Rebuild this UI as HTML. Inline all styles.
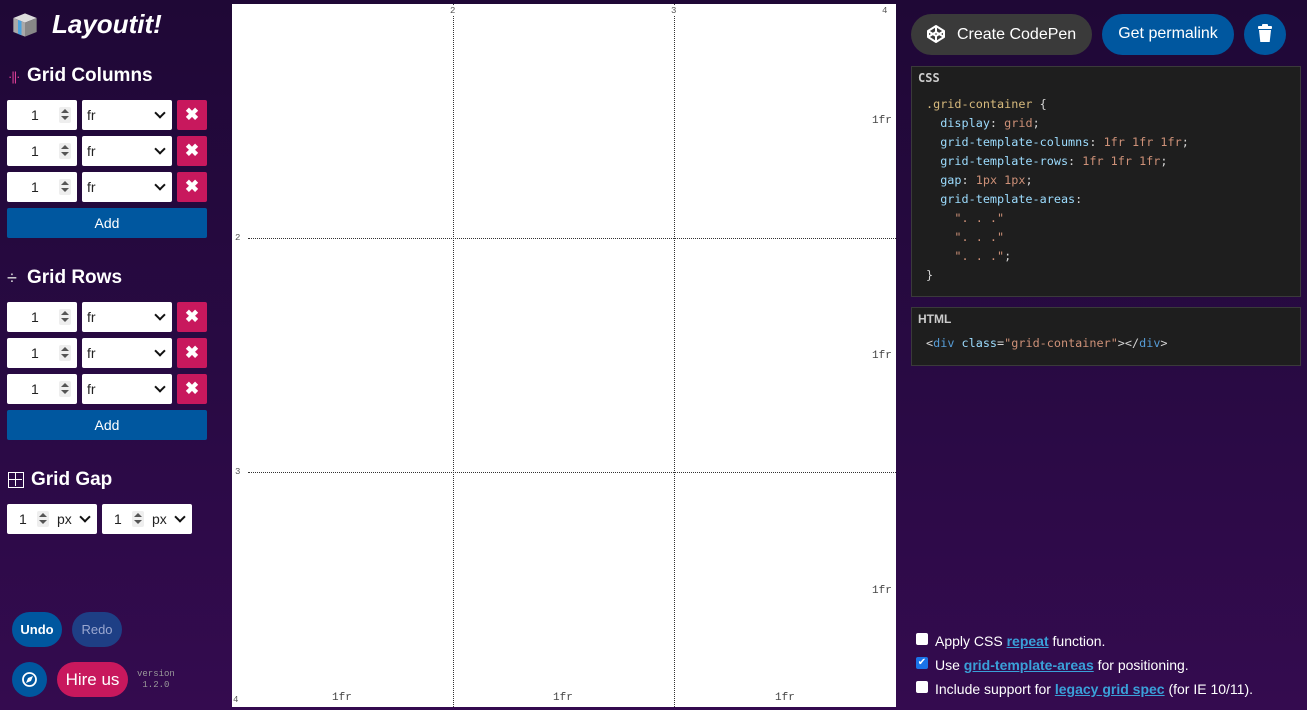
<!DOCTYPE html>
<html><head><meta charset="utf-8"><style>
*{box-sizing:border-box;margin:0;padding:0}
body{width:1307px;height:710px;overflow:hidden;background:linear-gradient(180deg,#1f0836 0%,#2a0a45 60%,#340b4f 100%);font-family:"Liberation Sans",sans-serif;position:relative;color:#fff}
.a{position:absolute}
.num{position:absolute;background:#fff;height:30px;width:70px;border-radius:2px;color:#222;font-size:14px}
.num .v{position:absolute;left:24px;top:7px}
.num .sp{position:absolute;right:6px;top:7px;width:12px;height:16px;background:#eee;border-radius:2px}
.sp:before{content:"";position:absolute;left:2px;top:2px;border:4px solid transparent;border-bottom:4px solid #555;border-top:0}
.sp:after{content:"";position:absolute;left:2px;top:9px;border:4px solid transparent;border-top:4px solid #555;border-bottom:0}
.sel{position:absolute;background:#fff;height:30px;width:90px;border-radius:2px;color:#222;font-size:14px}
.sel .v{position:absolute;left:5px;top:7px}
.chev{position:absolute;right:8px;top:9px;width:8px;height:8px;border-right:2px solid #111;border-bottom:2px solid #111;transform:rotate(45deg)}
.x{position:absolute;width:30px;height:30px;background:#c8185d;border-radius:2px;color:#fff;font-size:17px;text-align:center;line-height:30px;font-weight:bold}
.add{position:absolute;left:7px;width:200px;height:30px;background:#00579f;color:#fff;font-size:14px;text-align:center;line-height:30px;border-radius:2px}
h2{position:absolute;font-size:19px;font-weight:bold;color:#fff}
.vl{position:absolute;top:4px;height:703px;border-left:1px dotted #333}
.hl{position:absolute;left:248px;width:648px;border-top:1px dotted #333}
.lb{position:absolute;font-family:"Liberation Mono",monospace;font-size:9px;color:#555}
.fr{position:absolute;font-family:"Liberation Mono",monospace;font-size:11px;color:#444}
pre{font-family:"DejaVu Sans Mono","Liberation Mono",monospace;font-size:11.8px;line-height:19px;color:#9cdcfe}
.k{color:#9cdcfe}.s{color:#ce9178}.y{color:#d7ba7d}.w{color:#d4d4d4}.b{color:#569cd6}
.cb{position:absolute;left:916px;width:12px;height:12px;background:#fff;border-radius:2px}
.ct{position:absolute;left:935px;font-size:14px;color:#fff}
.ct u{color:#3aa0d8;font-weight:bold}
</style></head><body>

<div class="a" style="left:11px;top:11px;width:28px;height:28px">
<svg width="28" height="28" viewBox="0 0 24 24"><polygon points="12,2 22,6 12,10 2,6" fill="#ddd"/><polygon points="2,6 12,10 12,22 2,18" fill="#aaa"/><polygon points="12,10 22,6 22,18 12,22" fill="#888"/><polygon points="6,7.6 9,8.8 9,20.8 6,19.6" fill="#4aa3df"/></svg></div>
<div class="a" style="left:52px;top:9px;font-size:26px;font-weight:bold;font-style:italic">Layoutit!</div>

<div class="a" style="left:8px;top:69px;color:#e0409a;font-size:13px;letter-spacing:-1px">·||·</div>
<h2 style="left:27px;top:65px">Grid Columns</h2>

<div class="num" style="left:7px;top:100px"><span class="v">1</span><span class="sp"></span></div><div class="sel" style="left:82px;top:100px"><span class="v">fr</span><span class="chev"></span></div><div class="x" style="left:177px;top:100px">✖</div>
<div class="num" style="left:7px;top:136px"><span class="v">1</span><span class="sp"></span></div><div class="sel" style="left:82px;top:136px"><span class="v">fr</span><span class="chev"></span></div><div class="x" style="left:177px;top:136px">✖</div>
<div class="num" style="left:7px;top:172px"><span class="v">1</span><span class="sp"></span></div><div class="sel" style="left:82px;top:172px"><span class="v">fr</span><span class="chev"></span></div><div class="x" style="left:177px;top:172px">✖</div>
<div class="add" style="top:208px">Add</div>

<div class="a" style="left:7px;top:268px;font-size:18px;color:#ddd">÷</div>
<h2 style="left:27px;top:267px">Grid Rows</h2>
<div class="num" style="left:7px;top:302px"><span class="v">1</span><span class="sp"></span></div><div class="sel" style="left:82px;top:302px"><span class="v">fr</span><span class="chev"></span></div><div class="x" style="left:177px;top:302px">✖</div>
<div class="num" style="left:7px;top:338px"><span class="v">1</span><span class="sp"></span></div><div class="sel" style="left:82px;top:338px"><span class="v">fr</span><span class="chev"></span></div><div class="x" style="left:177px;top:338px">✖</div>
<div class="num" style="left:7px;top:374px"><span class="v">1</span><span class="sp"></span></div><div class="sel" style="left:82px;top:374px"><span class="v">fr</span><span class="chev"></span></div><div class="x" style="left:177px;top:374px">✖</div>
<div class="add" style="top:410px">Add</div>

<div class="a" style="left:8px;top:472px;width:16px;height:16px;border:1.5px solid #fff"><div class="a" style="left:6px;top:0;height:13px;border-left:1.5px solid #fff"></div><div class="a" style="top:6px;left:0;width:13px;border-top:1.5px solid #fff"></div></div>
<h2 style="left:31px;top:469px">Grid Gap</h2>
<div class="num" style="left:7px;top:504px;width:90px"><span class="v" style="left:12px">1</span><span class="sp" style="right:auto;left:30px"></span><span class="v" style="left:50px">px</span><span class="chev"></span></div>
<div class="num" style="left:102px;top:504px;width:90px"><span class="v" style="left:12px">1</span><span class="sp" style="right:auto;left:30px"></span><span class="v" style="left:50px">px</span><span class="chev"></span></div>

<div class="a" style="left:12px;top:612px;width:50px;height:35px;border-radius:18px;background:#00579f;font-size:13px;font-weight:bold;text-align:center;line-height:35px">Undo</div>
<div class="a" style="left:72px;top:612px;width:50px;height:35px;border-radius:18px;background:#1e3f85;font-size:13px;color:#9aa7d0;text-align:center;line-height:35px">Redo</div>
<div class="a" style="left:12px;top:662px;width:35px;height:35px;border-radius:50%;background:#00579f"><svg width="35" height="35" viewBox="0 0 35 35"><circle cx="17.5" cy="17.5" r="6.5" fill="none" stroke="#fff" stroke-width="1.8"/><polygon points="21,14 19,19 14,21 16,16" fill="#fff"/></svg></div>
<div class="a" style="left:57px;top:662px;width:71px;height:35px;border-radius:18px;background:#c8185d;font-size:17px;text-align:center;line-height:35px">Hire us</div>
<div class="a" style="left:137px;top:669px;font-family:'Liberation Mono',monospace;font-size:9px;color:#999;text-align:center;line-height:11px">version<br>1.2.0</div>

<div class="a" style="left:232px;top:4px;width:664px;height:703px;background:#fff"></div>
<div class="vl" style="left:453px"></div><div class="vl" style="left:674px"></div>
<div class="hl" style="top:238px"></div><div class="hl" style="top:472px"></div>
<div class="lb" style="left:450px;top:6px;background:#fff">2</div><div class="lb" style="left:671px;top:6px;background:#fff">3</div><div class="lb" style="left:882px;top:6px">4</div>
<div class="lb" style="left:235px;top:233px">2</div><div class="lb" style="left:235px;top:467px">3</div><div class="lb" style="left:233px;top:695px">4</div>
<div class="fr" style="left:872px;top:115px">1fr</div><div class="fr" style="left:872px;top:350px">1fr</div><div class="fr" style="left:872px;top:585px">1fr</div>
<div class="fr" style="left:332px;top:692px">1fr</div><div class="fr" style="left:553px;top:692px">1fr</div><div class="fr" style="left:775px;top:692px">1fr</div>

<div class="a" style="left:911px;top:14px;width:181px;height:41px;border-radius:21px;background:#3a3a3a;font-size:16px;line-height:41px;padding-left:46px">Create CodePen</div>
<svg class="a" style="left:926px;top:24px" width="20" height="20" viewBox="0 0 20 20" fill="none" stroke="#fff" stroke-width="2" stroke-linejoin="round"><polygon points="10,2 18,7 18,13 10,18 2,13 2,7"/><polyline points="2,7 10,12 18,7"/><polyline points="2,13 10,8 18,13"/><line x1="10" y1="2" x2="10" y2="8"/><line x1="10" y1="12" x2="10" y2="18"/></svg>
<div class="a" style="left:1102px;top:14px;width:132px;height:41px;border-radius:21px;background:#00579f;font-size:16px;line-height:40px;text-align:center">Get permalink</div>
<div class="a" style="left:1244px;top:14px;width:42px;height:41px;border-radius:50%;background:#00579f"><svg width="42" height="41" viewBox="0 0 42 41"><rect x="14" y="12" width="14" height="3" rx="1" fill="#fff"/><rect x="18" y="10" width="6" height="3" rx="1" fill="#fff"/><path d="M15 16h12l-1.3 12h-9.4z" fill="#fff"/></svg></div>

<div class="a" style="left:911px;top:66px;width:390px;height:231px;background:#1e1e1e;border:1px solid #3a3a3a">
<div class="a" style="left:6px;top:4px;font-size:12px;font-weight:bold;color:#ccc;font-family:'DejaVu Sans Mono',monospace">CSS</div>
<pre class="a" style="left:14px;top:28px"><span class="y">.grid-container</span> <span class="w">{</span>
  display<span class="w">:</span> <span class="s">grid</span><span class="w">;</span>
  grid-template-columns<span class="w">:</span> <span class="s">1fr 1fr 1fr</span><span class="w">;</span>
  grid-template-rows<span class="w">:</span> <span class="s">1fr 1fr 1fr</span><span class="w">;</span>
  gap<span class="w">:</span> <span class="s">1px 1px</span><span class="w">;</span>
  grid-template-areas<span class="w">:</span>
    <span class="s">". . ."</span>
    <span class="s">". . ."</span>
    <span class="s">". . ."</span><span class="w">;</span>
<span class="w">}</span></pre></div>

<div class="a" style="left:911px;top:307px;width:390px;height:59px;background:#1e1e1e;border:1px solid #3a3a3a">
<div class="a" style="left:6px;top:4px;font-size:12px;font-weight:bold;color:#ccc">HTML</div>
<pre class="a" style="left:14px;top:26px"><span class="w">&lt;</span><span class="b">div</span> class<span class="w">=</span><span class="s">"grid-container"</span><span class="w">&gt;&lt;/</span><span class="b">div</span><span class="w">&gt;</span></pre></div>

<div class="cb" style="top:633px"></div><div class="ct" style="top:633px">Apply CSS <u>repeat</u> function.</div>
<div class="cb" style="top:657px;background:#1a73e8;color:#fff;font-size:10px;line-height:12px;text-align:center">✔</div><div class="ct" style="top:657px">Use <u>grid-template-areas</u> for positioning.</div>
<div class="cb" style="top:681px"></div><div class="ct" style="top:681px">Include support for <u>legacy grid spec</u> (for IE 10/11).</div>
</body></html>
